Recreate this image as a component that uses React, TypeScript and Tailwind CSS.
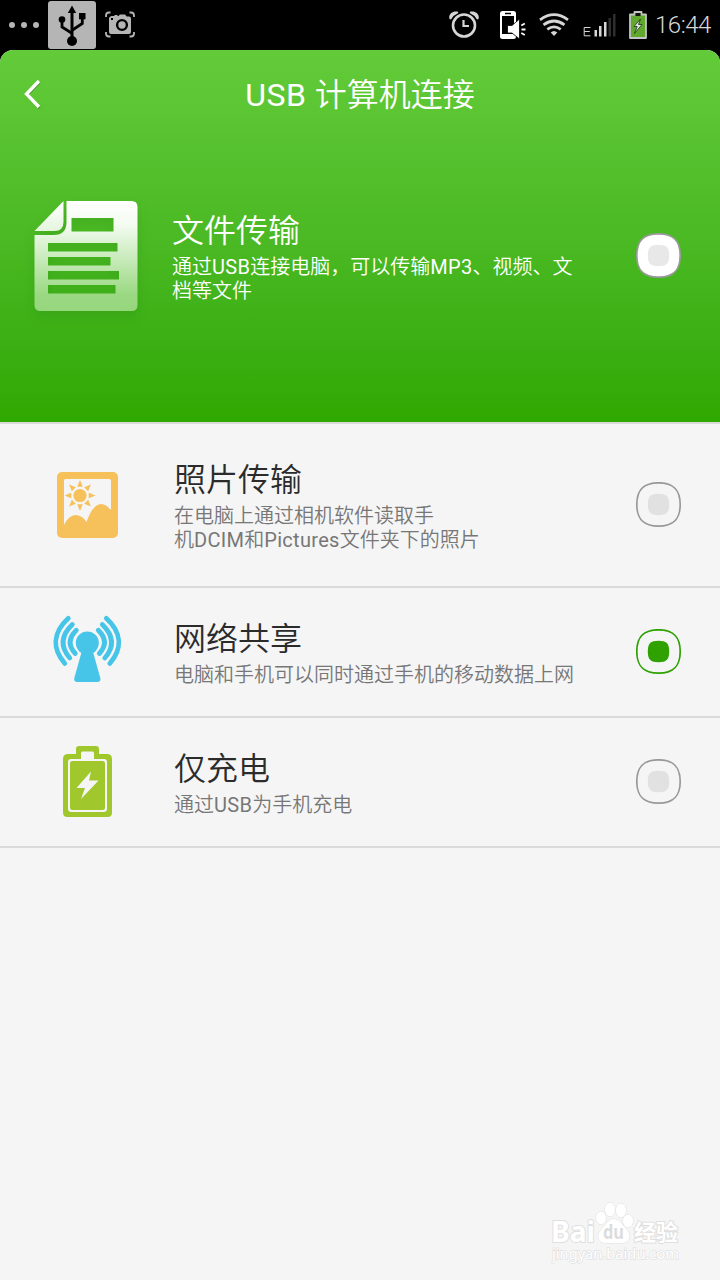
import { useState, type ReactNode } from 'react';
import clsx from 'clsx';

type ModeId = 'file' | 'photo' | 'network' | 'charge';

interface ListMode {
  id: ModeId;
  title: string;
  lines: string[];
  icon: ReactNode;
  rowClass: string;
}

/* Status bar icons */

function UsbIcon() {
  return (
    <svg width="48" height="48" viewBox="0 0 48 48" fill="none">
      <rect width="48" height="48" rx="3" fill="#b5b5b5" />
      <path d="M24 9v29" stroke="#000" strokeWidth="3" />
      <path d="M24 4.500l4.200 7.500h-8.400z" fill="#000" />
      <circle cx="24" cy="40" r="5" fill="#000" />
      <path d="M14 19v7l9.500 6M34.300 15v7.500L24.500 29" stroke="#000" strokeWidth="2.800" />
      <circle cx="14" cy="18.500" r="3.300" fill="#000" />
      <rect x="31" y="12" width="6.500" height="6.300" fill="#000" />
    </svg>
  );
}

function CaptureIcon() {
  return (
    <svg width="30" height="28" viewBox="0 -0.500 30 28" fill="none">
      <path
        d="M1 5.500V4q0-3 3-3h1.500M24.500 1H26q3 0 3 3v1.500M1 20.500V22q0 3 3 3h1.500M24.500 25H26q3 0 3-3v-1.500"
        stroke="#b5b5b5"
        strokeWidth="1.800"
      />
      <path
        d="M6.500 4.500h3v-1h3v1h1l1.500-1.500h5l1.700 2H24q2 0 2 2v13.500q0 2-2 2H6q-2 0-2-2V7q0-1.500 1.500-2z"
        fill="#b5b5b5"
      />
      <circle cx="17" cy="13.500" r="4.900" stroke="#000" strokeWidth="2.400" />
      <rect x="6" y="6.500" width="2" height="2" fill="#000" />
    </svg>
  );
}

function AlarmIcon() {
  return (
    <svg width="30" height="28" viewBox="0 0 30 28" fill="none">
      <circle cx="15" cy="14.500" r="11" stroke="#d6d6d6" strokeWidth="2.600" />
      <path d="M14.500 9v6H20" stroke="#d6d6d6" strokeWidth="2.200" />
      <path
        d="M.5 8C-1 3 4-.5 9 .8l.3 1.200Q4.500 4 2 8.500zM29.500 8C31 3 26-.5 21 .8l-.3 1.200Q25.500 4 28 8.500z"
        fill="#d6d6d6"
      />
    </svg>
  );
}

function PhoneMuteIcon() {
  return (
    <svg width="26" height="28" viewBox="0 0 26 28" fill="none">
      <path
        fillRule="evenodd"
        d="M2.500 0h11Q16 0 16 2.500v23q0 2.500-2.500 2.500h-11Q0 28 0 25.500v-23Q0 0 2.500 0zM2 5v18h12V5zM5 1.800v1.400h6V1.800z"
        fill="#fff"
      />
      <path d="M7.500 14.500h4.500L19.500 8v20L12 22H7.500z" fill="#fff" stroke="#000" strokeWidth=".8" />
      <path d="M21.300 14.500l3.500-2M21.500 18.500h4M21.300 22l3.500 2" stroke="#fff" strokeWidth="1.800" />
    </svg>
  );
}

function WifiIcon() {
  return (
    <svg width="30" height="24" viewBox="0 0 30 24" fill="none" stroke="#d6d6d6">
      <path d="M1 6.800Q15-3.500 29 6.800" strokeWidth="2.700" />
      <path d="M4.500 11.800q10.500-7.600 21 0" strokeWidth="2.700" />
      <path d="M8.300 16.300q6.700-4.800 13.400 0" strokeWidth="2.700" />
      <path d="M11.700 19.500q3.300-3 6.600 0L15 23z" fill="#d6d6d6" stroke="none" />
    </svg>
  );
}

function SignalIcon() {
  return (
    <svg width="33" height="24" viewBox="0 0 33 24">
      <path d="M7.500 14.500H1.200v8.300h6.300M1.200 18.500h5.600" fill="none" stroke="#d6d6d6" strokeWidth="1" />
      <rect x="11.500" y="17" width="2.500" height="6.500" fill="#d6d6d6" />
      <rect x="16" y="13" width="2.500" height="10.500" fill="#d6d6d6" />
      <rect x="21" y="9" width="2.500" height="14.500" fill="#d6d6d6" />
      <rect x="25.500" y="5" width="2.500" height="18.500" fill="#2e2e2e" />
      <rect x="30" y="1" width="2.500" height="22.500" fill="#2e2e2e" />
    </svg>
  );
}

function StatusBatteryIcon() {
  return (
    <svg width="18" height="28" viewBox="0 0 18 28">
      <path
        d="M5.500 3.500V1h7v2.500H17V27H1V3.500z"
        fill="#61a82f"
        stroke="#c4c4c4"
        strokeWidth="1.800"
        strokeLinejoin="round"
      />
      <path d="M6.500 2h5v3h-5z" fill="#111" />
      <path d="M11.500 8L5 15.500h3.200L5.500 22.500l7.500-9H9.500z" fill="#e6e6e6" stroke="#1d3510" strokeWidth=".8" />
    </svg>
  );
}

/* Mode icons */

function DocumentIcon() {
  return (
    <svg
      width="104"
      height="112"
      viewBox="0.500 0 104 112"
      className="drop-shadow-[0_6px_6px_rgba(0,80,0,0.12)]"
    >
      <defs>
        <linearGradient id="paper" x1="0" y1="0" x2="0" y2="1">
          <stop offset="0" stopColor="#fff" />
          <stop offset=".22" stopColor="#f3fbf0" />
          <stop offset=".85" stopColor="#9ad982" />
          <stop offset="1" stopColor="#96d67d" />
        </linearGradient>
        <linearGradient id="fold" x1="0" y1="0" x2="0" y2="1">
          <stop offset="0" stopColor="#fff" />
          <stop offset="1" stopColor="#e4f6dd" />
        </linearGradient>
      </defs>
      <path
        fillRule="evenodd"
        d="M33 1h65q6 0 6 6v98q0 6-6 6H7q-6 0-6-6V35h19q13 0 13-13zM38 18v13.500h42V18zM14.500 43v8.500H84V43zM14.500 57v8.500H77V57zM14.500 71v8.500h71V71zM14.500 85v8.500H82V85z"
        fill="url(#paper)"
      />
      <path d="M30 1v21q0 9-9 9H1z" fill="url(#fold)" />
    </svg>
  );
}

function PhotoIcon() {
  const rays = [0, 45, 90, 135, 180, 225, 270, 315];

  return (
    <svg width="61" height="66" viewBox="0 0 61 66">
      <rect width="61" height="66" rx="5" fill="#f6c15b" />
      <path d="M8.500 7H52q2 0 2 2v29q-5-6-10-6-8 0-14.500 18Q25 43 18.500 43 12 43 7 53V8.500Q7 7 8.500 7z" fill="#f5f5f5" />
      <circle cx="23" cy="23.500" r="6.600" fill="#f6c15b" />
      {rays.map((angle) => (
        <path
          key={angle}
          d="M20.200 14.800L23 8l2.800 6.800z"
          fill="#f6c15b"
          transform={`rotate(${angle} 23 23.500)`}
        />
      ))}
    </svg>
  );
}

function AntennaIcon() {
  return (
    <svg width="68" height="74" viewBox="-0.800 0 68 74" className="overflow-visible">
      <g fill="none" stroke="#47c5e9" strokeWidth="4.800" strokeLinecap="round">
        <path d="M14.500 3.300C-1.500 18-1.500 34 11 48.500" />
        <path d="M18.500 9.500C6.500 21 6.500 32 16 43" />
        <path d="M22.500 15.200C14.500 23 14.500 31 21.500 38.500" />
        <path d="M52.500 3.300C68.500 18 68.500 34 56 48.500" />
        <path d="M48.500 9.500C60.500 21 60.500 32 51 43" />
        <path d="M44.500 15.200C52.500 23 52.500 31 45.500 38.500" />
      </g>
      <circle cx="33.500" cy="28" r="11.500" fill="#47c5e9" />
      <path d="M27.500 38h12l7 25q.8 4-3 4h-20q-3.800 0-3-4z" fill="#47c5e9" />
    </svg>
  );
}

function BatteryIcon() {
  return (
    <svg width="49" height="74" viewBox="0 -0.500 49 74">
      <path
        d="M13 8.500V3.500Q13 .5 16 .5h17q3 0 3 3v5h8q5 0 5 5V67q0 4.500-4.500 4.500h-40Q0 71.500 0 67V13.500q0-5 5-5z"
        fill="#a0c82d"
      />
      <path
        d="M18 13.500v-6Q18 6 19.500 6h10Q31 6 31 7.500v6h10q3 0 3 3V63q0 3.500-3.500 3.500H8.500Q5 66.500 5 63V16.500q0-3 3-3z"
        fill="#f5f5f5"
      />
      <rect x="7" y="15.500" width="35" height="49" rx="2.500" fill="#a0c82d" />
      <path d="M28 26L13.500 42.500H22L18 53.500 35.500 35H26z" fill="#f5f5f5" />
    </svg>
  );
}

// Sets Latin runs in Roboto, the Chinese text keeps the page font
function MixedText({ text }: { text: string }) {
  return text.split(/([A-Za-z0-9]+)/).map((part, index) =>
    index % 2 ? (
      <span key={index} className="font-['Roboto',sans-serif] leading-none font-normal tracking-[0.015em]">
        {part}
      </span>
    ) : (
      part
    )
  );
}

interface RadioProps {
  label: string;
  checked: boolean;
  filled?: boolean;
  onSelect: () => void;
}

function Radio({ label, checked, filled = false, onSelect }: RadioProps) {
  return (
    <button role="radio" aria-checked={checked} aria-label={label} onClick={onSelect} className="shrink-0">
      <svg width="46" height="46" viewBox="0.500 0.500 46 46">
        <path
          d="M23 1.300C38 1.300 44.700 8 44.700 23S38 44.700 23 44.700 1.300 38 1.300 23 8 1.300 23 1.300z"
          fill={filled ? '#fff' : 'none'}
          stroke={checked ? '#2fa202' : '#999'}
          strokeWidth="1.700"
        />
        <path
          d="M23 12.300c8 0 10.700 2.700 10.700 10.700S31 33.700 23 33.700 12.300 31 12.300 23 15 12.300 23 12.300z"
          fill={checked ? '#2fa202' : filled ? '#e8e8e8' : '#e1e1e1'}
        />
      </svg>
    </button>
  );
}

const modes: ListMode[] = [
  {
    id: 'photo',
    title: '照片传输',
    lines: ['在电脑上通过相机软件读取手', '机DCIM和Pictures文件夹下的照片'],
    icon: <PhotoIcon />,
    rowClass: 'h-[164px]',
  },
  {
    id: 'network',
    title: '网络共享',
    lines: ['电脑和手机可以同时通过手机的移动数据上网'],
    icon: <AntennaIcon />,
    rowClass: 'h-[130px]',
  },
  {
    id: 'charge',
    title: '仅充电',
    lines: ['通过USB为手机充电'],
    icon: <BatteryIcon />,
    rowClass: 'h-[130px]',
  },
];

function StatusBar() {
  return (
    <div className="flex h-[50px] items-center bg-black">
      <div className="flex w-12 items-center gap-[6px] pl-[9px]">
        <span className="size-[6px] rounded-full bg-[#b5b5b5]" />
        <span className="size-[6px] rounded-full bg-[#b5b5b5]" />
        <span className="size-[6px] rounded-full bg-[#b5b5b5]" />
      </div>
      <UsbIcon />
      <div className="ml-[9px]">
        <CaptureIcon />
      </div>
      <div className="ml-auto flex items-center pr-2">
        <AlarmIcon />
        <div className="ml-[21px]">
          <PhoneMuteIcon />
        </div>
        <div className="ml-[13px]">
          <WifiIcon />
        </div>
        <div className="ml-[14px]">
          <SignalIcon />
        </div>
        <div className="ml-[13px]">
          <StatusBatteryIcon />
        </div>
        <span className="ml-[8px] w-[57px] whitespace-nowrap font-['Roboto',sans-serif] text-[24px] leading-[52px] font-[350] tracking-[-0.5px] text-[#d6d6d6]">
          16:44
        </span>
      </div>
    </div>
  );
}

function Watermark() {
  return (
    <svg
      width="132"
      height="68"
      viewBox="0 0 132 68"
      className="absolute right-[37px] bottom-[12px]"
      fill="#fff"
      stroke="#dfdfdf"
      strokeWidth="1"
      paintOrder="stroke"
    >
      <text x="0" y="42" fontSize="29" fontWeight="700" textLength="44" lengthAdjust="spacingAndGlyphs" strokeWidth="2">
        Bai
      </text>
      <ellipse cx="50" cy="18" rx="5" ry="6.500" />
      <ellipse cx="59" cy="9.500" rx="5" ry="7" />
      <ellipse cx="70" cy="10.500" rx="5" ry="7" />
      <ellipse cx="77" cy="21" rx="5" ry="6.500" />
      <path d="M63 19c6 0 8 6 13 11 5 6 2 13-5 13H55c-8 0-10-7-5-13 5-5 7-11 13-11z" />
      <text x="52" y="39" fontSize="20" fontWeight="700" textLength="21" lengthAdjust="spacingAndGlyphs" fill="#dcdcdc" stroke="none">
        du
      </text>
      <text x="83" y="40" fontSize="22" fontWeight="700" strokeWidth="2">
        经验
      </text>
      <text x="1" y="59" fontSize="15" textLength="127" lengthAdjust="spacingAndGlyphs" stroke="#dfdfdf" strokeWidth="1.300">
        jingyan.baidu.com
      </text>
    </svg>
  );
}

export default function App() {
  const [selected, setSelected] = useState<ModeId>('network');

  return (
    <div className="relative h-[1280px] w-[720px] overflow-hidden bg-black font-['Noto_Sans','Noto_Sans_CJK_SC',sans-serif]">
      <StatusBar />

      <div className="h-[1230px] overflow-hidden rounded-t-[13px] bg-[#f5f5f5]" role="radiogroup">
        <section className="h-[372px] bg-linear-to-b from-[#63cb39] to-[#2fa800] text-white">
          <header className="flex h-[88px] items-center">
            <button aria-label="返回" className="w-[72px] pl-[23px]">
              <svg width="20" height="32" viewBox="0 0 20 32" fill="none">
                <path d="M16.500 4L4 17l12.500 13" stroke="#4b8f30" strokeWidth="3.200" />
                <path d="M16 3L3.500 16 16 29" stroke="#fff" strokeWidth="3.400" />
              </svg>
            </button>
            <h1 className="flex-1 pr-[72px] text-center text-[32px] leading-[40px] font-[350]">
              <MixedText text="USB 计算机连接" />
            </h1>
          </header>

          <div className="flex items-center pt-[62px]">
            <div className="w-[172px] shrink-0 pl-[34px]">
              <DocumentIcon />
            </div>
            <div className="flex-1">
              <h2 className="mb-[5px] text-[32px] leading-[40px] font-[350]">文件传输</h2>
              <p className="text-[20px] leading-[24px] font-[350] whitespace-nowrap">
                <MixedText text="通过USB连接电脑，可以传输MP3、视频、文" />
                <br />
                档等文件
              </p>
            </div>
            <div className="flex w-[84px] shrink-0">
              <Radio label="文件传输" filled checked={selected === 'file'} onSelect={() => setSelected('file')} />
            </div>
          </div>
        </section>

        <div className="border-t-2 border-[#dadada]">
          {modes.map((mode) => (
            <div key={mode.id} className={clsx('flex items-center border-b-2 border-[#dadada]', mode.rowClass)}>
              <div className="flex w-[174px] shrink-0 justify-center">{mode.icon}</div>
              <div className="flex-1">
                <h2 className="mb-[5px] text-[32px] leading-[40px] font-[350] text-[#2b2b2b]">{mode.title}</h2>
                <p className="text-[20px] leading-[24px] font-[350] whitespace-nowrap text-[#777]">
                  {mode.lines.map((line) => (
                    <span key={line} className="block">
                      <MixedText text={line} />
                    </span>
                  ))}
                </p>
              </div>
              <div className="flex w-[84px] shrink-0">
                <Radio
                  label={mode.title}
                  checked={selected === mode.id}
                  onSelect={() => setSelected(mode.id)}
                />
              </div>
            </div>
          ))}
        </div>
      </div>

      <Watermark />
    </div>
  );
}
